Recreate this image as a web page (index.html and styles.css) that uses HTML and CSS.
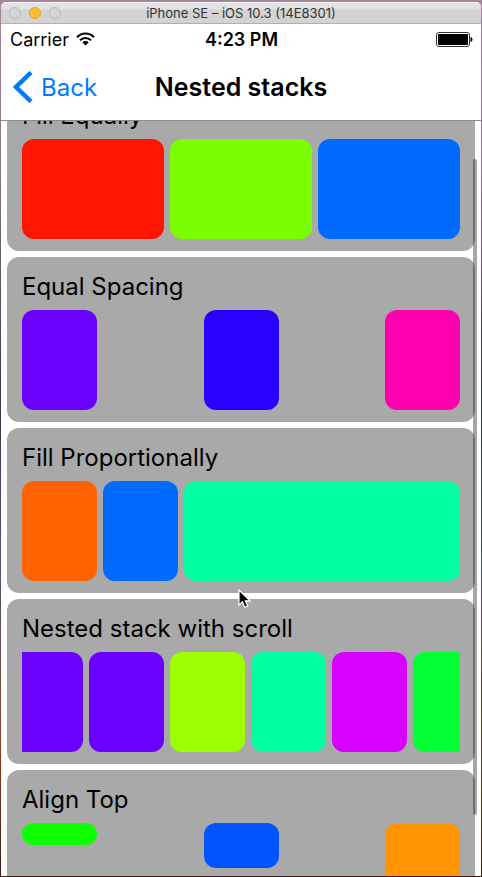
FILE: index.html
```
<!DOCTYPE html>
<html lang="en">
<head>
<meta charset="utf-8">
<meta name="viewport" content="width=device-width, initial-scale=1">
<title>Nested stacks</title>
<link rel="stylesheet" href="styles.css">
</head>
<body>
<div class="window">
  <header class="titlebar">
    <div class="controls">
      <button class="control" aria-label="Close"></button>
      <button class="control control-minimize" aria-label="Minimize"></button>
      <button class="control" aria-label="Zoom"></button>
    </div>
    <span class="window-title">iPhone SE – iOS 10.3 (14E8301)</span>
  </header>
  <div class="statusbar">
    <div class="carrier">
      <span>Carrier</span>
      <svg width="19" height="14" viewBox="0 0 19 14" aria-hidden="true">
        <g fill="none" stroke="#000" stroke-width="2">
          <path d="M1 5.2C5.8.3 13.2.3 18 5.2"/>
          <path d="M4 8.2c3.200-3.100 7.800-3.100 11 0"/>
        </g>
        <path d="M6.300 10.200c1.900-1.700 4.500-1.700 6.400 0L9.500 13.500z"/>
      </svg>
    </div>
    <span class="time">4:23 PM</span>
    <svg class="battery" width="37" height="15" viewBox="0 0 37 15" aria-hidden="true">
      <rect x=".5" y=".5" width="33" height="14" rx="2.500" fill="#fff" stroke="#333"/>
      <rect x="2" y="2" width="30" height="11" rx="1"/>
      <path d="M34.500 5c2.700.4 2.700 4.600 0 5z"/>
    </svg>
  </div>
  <nav class="navbar">
    <button class="back">
      <svg width="20" height="32" viewBox="0 0 20 32" aria-hidden="true"><path d="M18 1.500L3 16l15 14.500" fill="none" stroke="#007aff" stroke-width="4.500"/></svg>
      <span>Back</span>
    </button>
    <h1 class="title">Nested stacks</h1>
  </nav>
  <main class="viewport">
    <div class="stack">
      <section class="card">
        <h2 class="card-title">Fill Equally</h2>
        <div class="row fill-equally">
          <div class="tile red"></div><div class="tile lime"></div><div class="tile azure"></div>
        </div>
      </section>
      <section class="card">
        <h2 class="card-title">Equal Spacing</h2>
        <div class="row equal-spacing">
          <div class="tile violet"></div><div class="tile indigo"></div><div class="tile pink"></div>
        </div>
      </section>
      <section class="card">
        <h2 class="card-title">Fill Proportionally</h2>
        <div class="row">
          <div class="tile orange"></div><div class="tile azure"></div><div class="tile mint grow"></div>
        </div>
      </section>
      <section class="card">
        <h2 class="card-title">Nested stack with scroll</h2>
        <div class="row scroll-row">
          <div class="tile violet scrolled"></div><div class="tile violet"></div><div class="tile yellow-green"></div><div class="tile mint"></div><div class="tile magenta"></div><div class="tile green"></div>
        </div>
      </section>
      <section class="card">
        <h2 class="card-title">Align Top</h2>
        <div class="row equal-spacing">
          <div class="tile pure-green short"></div><div class="tile blue medium"></div><div class="tile amber"></div>
        </div>
      </section>
    </div>
    <div class="scroll-thumb"></div>
    <svg class="cursor" width="14" height="20" viewBox="0 0 14 20" aria-hidden="true"><path d="M1 1v15l3.500-3.200 2.300 5.400 2.800-1.200-2.300-5.200H12z" fill="#000" stroke="#fff" stroke-width="1.200"/></svg>
  </main>
</div>
</body>
</html>
```

FILE: styles.css
```
* {
  box-sizing: border-box;
}

body {
  margin: 0;
  padding: 2px 1px 1px;
  height: 100vh;
  background: linear-gradient(#a1869c 0, #8a7488 20%, #353648 45%, #50556f 65%, #8a3d1c 86%, #3a1c18 100%);
  font-family: Inter, "Liberation Sans", sans-serif;
  color: #000;
}

button {
  padding: 0;
  border: 0;
  background: none;
  font: inherit;
}

svg {
  display: block;
}

.window {
  display: flex;
  flex-direction: column;
  height: 100%;
  overflow: hidden;
  border-radius: 5px 5px 0 0;
  background: #fff;
}

.titlebar {
  display: grid;
  grid-template-columns: 1fr auto 1fr;
  align-items: center;
  height: 22px;
  padding: 0 8px;
  border-top: 1px solid #f6f6f6;
  border-bottom: 1px solid #b0b0b0;
  background: linear-gradient(#e2e2e2 0, #e2e2e2 6px, #d3d3d3 7px);
}

.controls {
  display: flex;
  gap: 8px;
}

.control {
  width: 12px;
  height: 12px;
  border: 1px solid #bababa;
  border-radius: 50%;
  background: #d5d5d5;
}

.control-minimize {
  border-color: #e5a02c;
  background: #fdbc31;
}

.window-title {
  font-size: 13px;
  color: #333;
}

.statusbar {
  display: grid;
  grid-template-columns: 1fr auto 1fr;
  align-items: center;
  height: 30px;
  padding: 0 8px 0 9px;
  font-size: 18px;
}

.carrier {
  display: flex;
  align-items: center;
  gap: 7px;
}

.time {
  font-weight: 600;
}

.battery {
  justify-self: end;
}

.navbar {
  display: grid;
  grid-template-columns: 1fr auto 1fr;
  align-items: center;
  height: 67px;
  padding: 0 12px;
  border-bottom: 1px solid #8a8a8a;
}

.back {
  display: flex;
  align-items: center;
  justify-self: start;
  gap: 8px;
  font-size: 24px;
  color: #007aff;
}

.title {
  margin: 0;
  font-size: 25px;
  font-weight: 600;
}

.viewport {
  position: relative;
  flex: 1;
  min-height: 0;
  overflow: hidden;
}

.stack {
  display: flex;
  flex-direction: column;
  gap: 6px;
  margin-top: -35px;
  padding: 0 6px;
}

.card {
  padding: 15px 15px 12px;
  border-radius: 12px;
  background: #a9a9a9;
}

.card-title {
  margin: 0 0 8px;
  font-size: 24px;
  font-weight: 400;
  line-height: 30px;
}

.row {
  display: flex;
  gap: 6px;
  height: 100px;
}

.tile {
  flex: none;
  width: 75px;
  border-radius: 12px;
}

.fill-equally .tile,
.grow {
  flex: 1;
}

.equal-spacing {
  justify-content: space-between;
}

.scroll-row {
  overflow: hidden;
}

.scrolled {
  margin-left: -14px;
}

.short {
  height: 22px;
}

.medium {
  height: 45px;
}

.red { background: #ff1500; }
.lime { background: #7bff00; }
.azure { background: #006aff; }
.violet { background: #6a00ff; }
.indigo { background: #2a00ff; }
.pink { background: #ff00ae; }
.orange { background: #ff6200; }
.mint { background: #00ffa0; }
.yellow-green { background: #9dff00; }
.magenta { background: #d800ff; }
.green { background: #00ff33; }
.pure-green { background: #0dff00; }
.blue { background: #0055ff; }
.amber { background: #ff9500; }

.scroll-thumb {
  position: absolute;
  top: 38px;
  right: 4px;
  bottom: 61px;
  width: 4px;
  border-radius: 2px;
  background: rgba(0, 0, 0, 0.35);
}

.cursor {
  position: absolute;
  top: 468px;
  left: 50%;
  margin-left: -3px;
}
```
